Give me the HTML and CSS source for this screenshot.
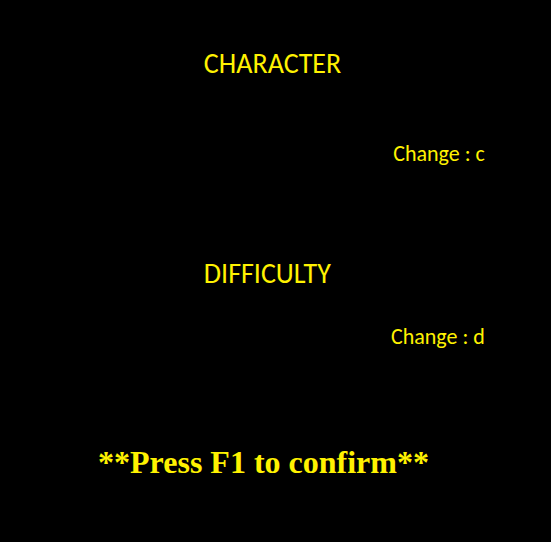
FILE: index.html
```html
<!DOCTYPE html>
<html lang="en">
<head>
<meta charset="utf-8">
<title>Game options</title>
<link rel="stylesheet" href="styles.css">
</head>
<body>
<main class="menu">
  <section class="option">
    <h1 class="title">CHARACTER</h1>
    <p class="hint">Change : c</p>
  </section>
  <section class="option difficulty">
    <h1 class="title">DIFFICULTY</h1>
    <p class="hint">Change : d</p>
  </section>
  <p class="confirm">**Press F1 to confirm**</p>
</main>
</body>
</html>
```
FILE: styles.css
```css
* { box-sizing: border-box; margin: 0; }

body {
  background: #000;
  color: #fff200;
  font-family: Carlito, Calibri, Lato, sans-serif;
}

.menu {
  display: flex;
  flex-direction: column;
  min-height: 100vh;
  padding-top: 48px;
}

.option {
  display: flex;
  flex-direction: column;
  gap: 62px;
  height: 210px;
}

.difficulty { gap: 35px; height: 184px; }

.title {
  padding-left: 37%;
  font-size: 28px;
  font-weight: 400;
  line-height: 32px;
}

.hint {
  align-self: flex-end;
  padding-right: 12%;
  font-size: 22px;
  line-height: 24px;
}

.confirm {
  padding-right: 24px;
  font-family: "Liberation Serif", serif;
  font-size: 32px;
  font-weight: 700;
  line-height: 40px;
  text-align: center;
}
```
